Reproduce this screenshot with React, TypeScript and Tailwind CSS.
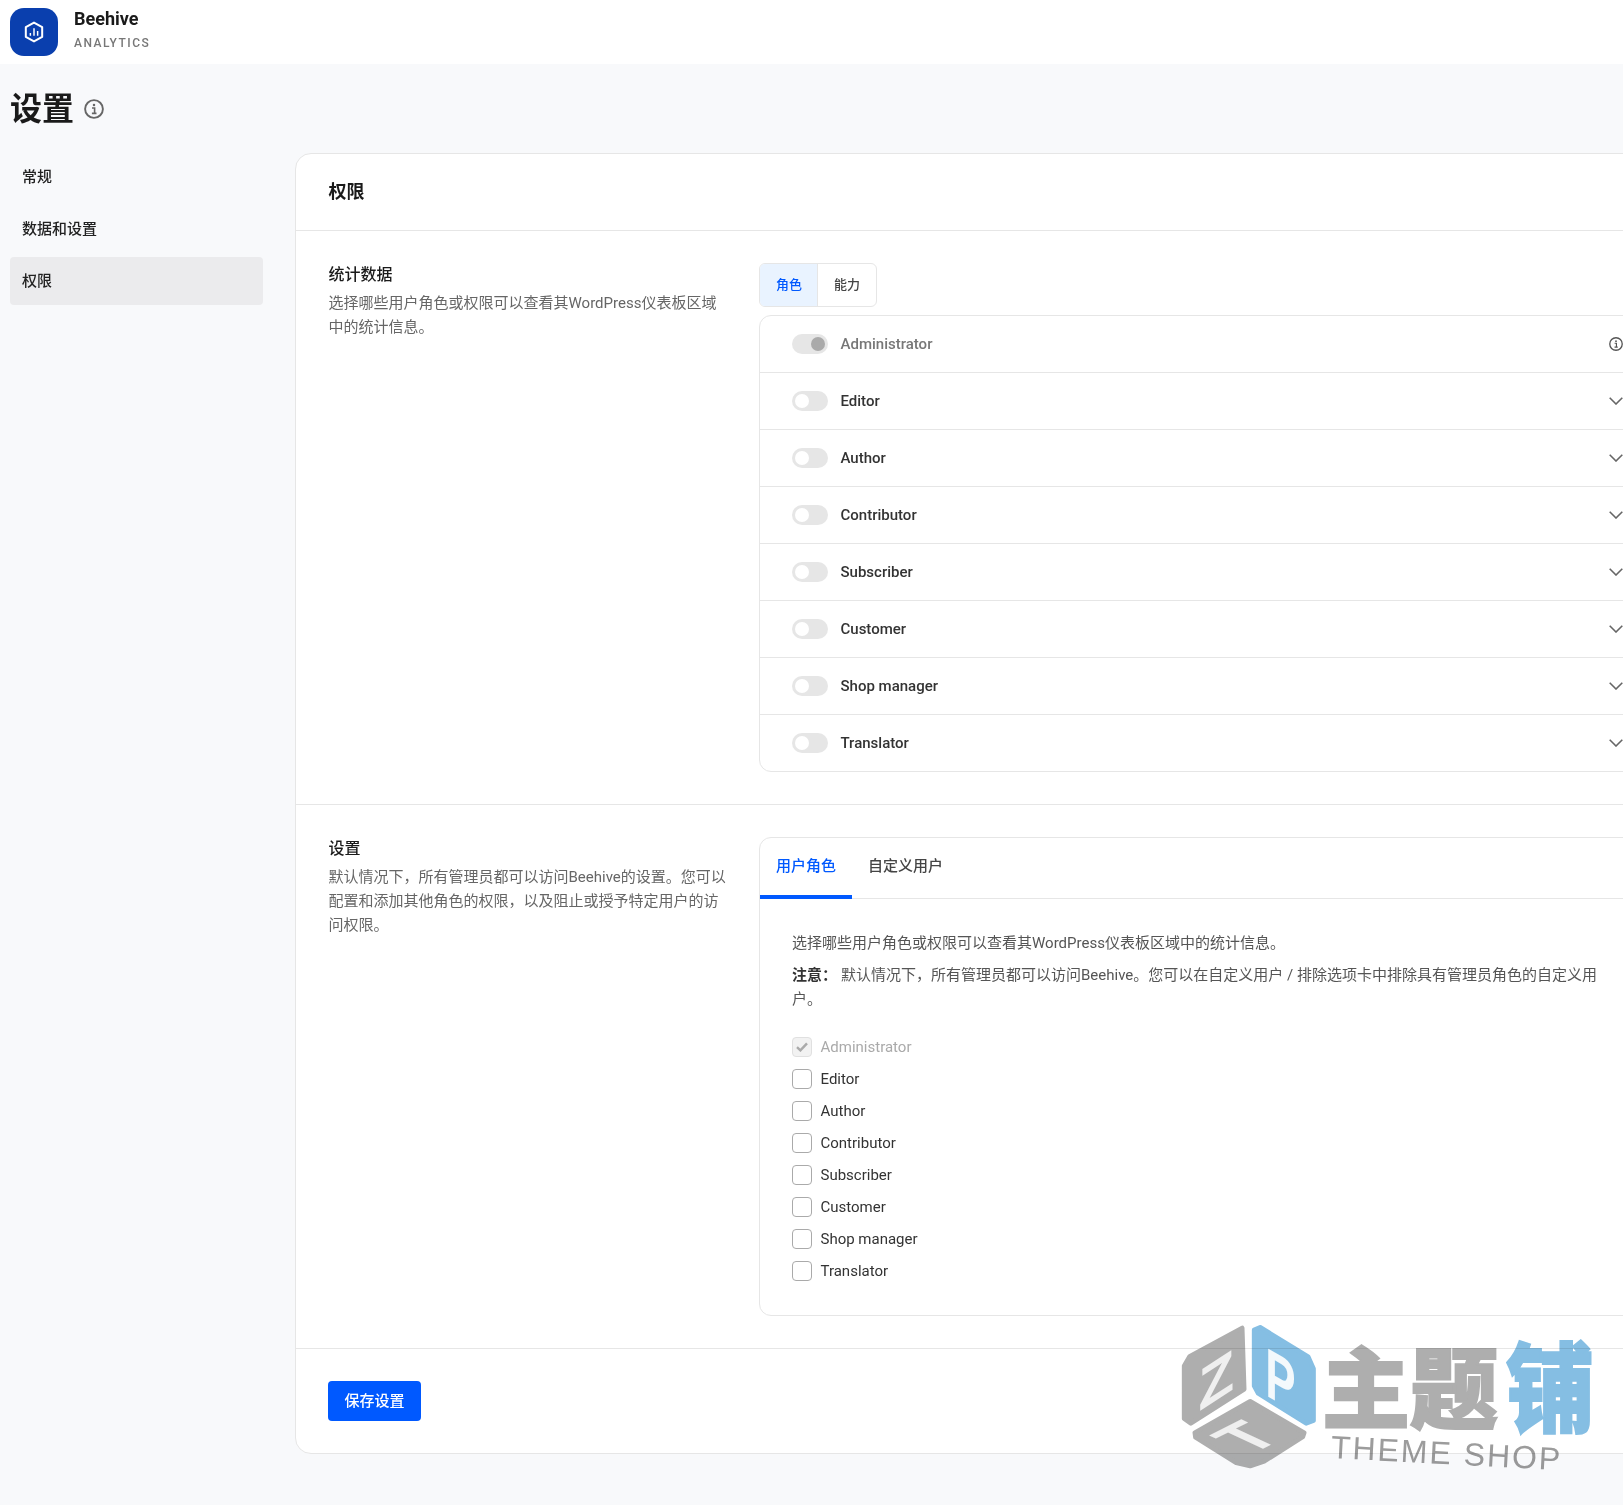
import React from 'react';

const roles = ['Editor', 'Author', 'Contributor', 'Subscriber', 'Customer', 'Shop manager', 'Translator'];

const InfoIcon = ({ className = '' }: { className?: string }) => (
  <svg viewBox="0 0 20 20" className={className} fill="none">
    <circle cx="10" cy="10" r="8.9" stroke="currentColor" strokeWidth="1.9" />
    <circle cx="10" cy="6" r="1.25" fill="currentColor" />
    <path d="M8 9h2.6v5M7.9 14.4h4.6" stroke="currentColor" strokeWidth="1.6" />
  </svg>
);

const Toggle = ({ on = false }: { on?: boolean }) => (
  <span className={`flex h-5 w-9 shrink-0 items-center rounded-full bg-[#e6e6e6] px-[3px] ${on ? 'justify-end' : 'justify-start'}`}>
    <span className={`h-[14px] w-[14px] rounded-full ${on ? 'bg-[#aaaaaa]' : 'bg-white'}`} />
  </span>
);

const RoleRow = ({ label }: { label: string }) => (
  <div className="flex h-[57px] items-center border-t border-[#e6e6e6] px-8">
    <Toggle />
    <span className="ml-[12.5px] text-[15px] font-medium text-[#333333]">{label}</span>
    <svg viewBox="0 0 14 8" className="ml-auto h-2 w-[14px] text-[#666666]" fill="none">
      <path d="M0.7 0.8 7 7 13.3 0.8" stroke="currentColor" strokeWidth="1.6" />
    </svg>
  </div>
);

const CheckRow = ({ label, disabled = false }: { label: string; disabled?: boolean }) => (
  <label className="flex h-5 items-center gap-[8.5px]">
    <span className={`flex h-5 w-5 items-center justify-center rounded-[4px] border ${disabled ? 'border-[#e0e0e0] bg-[#f2f2f2]' : 'border-[#aaaaaa] bg-white'}`}>
      {disabled && (
        <svg viewBox="0 0 12 10" className="h-[10px] w-3" fill="none">
          <path d="M1 5.2 4.4 8.4 11 1.4" stroke="#aaaaaa" strokeWidth="2.4" />
        </svg>
      )}
    </span>
    <span className={`text-[15px] ${disabled ? 'text-[#aaaaaa]' : 'text-[#333333]'}`}>{label}</span>
  </label>
);

// ZTP cube + wordmark stamped over the bottom right corner
const Watermark = () => (
  <div className="pointer-events-none absolute left-[1181px] top-[1324px] h-[150px] w-[420px] blur-[0.5px] mix-blend-multiply">
    <svg viewBox="93 72 410 435" className="absolute left-0 top-0 h-[145px] w-[137px]">
      <g strokeLinejoin="round" strokeWidth="14">
        <path d="M276 84 282 268 122 370 102 356 102 198 118 170Z" fill="#aeaeae" stroke="#aeaeae" />
        <path d="M312 90 330 82 474 170 490 206 490 362 468 370 324 280 312 258Z" fill="#85bee3" stroke="#85bee3" />
        <path d="M300 304 462 398 458 410 342 484 300 498 258 488 136 412 134 398Z" fill="#aeaeae" stroke="#aeaeae" />
      </g>
      <text transform="translate(145,335) skewY(-33)" fontSize="175" fontWeight="700" fill="#efefef" fontFamily="Liberation Sans, sans-serif">Z</text>
      <text transform="translate(345,285) skewY(30) scale(0.65,1)" fontSize="210" fontWeight="700" fill="#f4f9fc" fontFamily="Liberation Sans, sans-serif">P</text>
      <text transform="matrix(1.64,-0.82,1.82,0.84,300,465)" fontSize="100" fontWeight="700" fill="#efefef" fontFamily="Liberation Sans, sans-serif">T</text>
    </svg>
    <div className="absolute left-[141px] top-[23px] flex items-center text-[88px] font-black leading-[88px] text-[#aeaeae] [-webkit-text-stroke:2px_#aeaeae]">
      主题<span className="ml-2 inline-block scale-y-110 text-[#85bee3] [-webkit-text-stroke:2px_#85bee3]">铺</span>
    </div>
    <div className="absolute left-[150px] top-[107px] origin-left rotate-[3deg] font-['Liberation_Sans',sans-serif] text-[32px] leading-[32px] tracking-[2px] text-[#9c9c9c]">
      THEME SHOP
    </div>
  </div>
);

export default function App() {
  return (
    <div className="relative h-[1505px] w-full overflow-hidden bg-[#f8f9fb] font-['Roboto','Noto_Sans_CJK_SC',sans-serif] text-[#333333]">
      <header className="flex h-[64px] items-center gap-4 bg-white pl-[10px]">
        <div className="flex h-12 w-12 items-center justify-center rounded-[14px] bg-[#0a3fae]">
          <svg viewBox="0 0 22 24" className="h-[22px] w-5" fill="none">
            <path d="M11 1.6 20 6.6V17.4L11 22.4 2 17.4V6.6Z" stroke="#fff" strokeWidth="2.2" strokeLinejoin="round" />
            <path d="M7 13v3M11 8v8M15 11v5" stroke="#fff" strokeWidth="1.6" />
          </svg>
        </div>
        <div className="mb-[5px] flex flex-col gap-[3px]">
          <span className="text-[18px] font-bold leading-[24px] text-[#1a1a1a]">Beehive</span>
          <span className="text-[12px] font-medium leading-[18px] tracking-[1.5px] text-[#777777]">ANALYTICS</span>
        </div>
      </header>

      <div className="flex h-[89px] items-center gap-[10px] pl-[10px]">
        <h1 className="text-[32px] font-bold leading-[40px] text-[#1a1a1a]">设置</h1>
        <InfoIcon className="h-5 w-5 text-[#666666]" />
      </div>

      <div className="flex items-start pl-[10px]">
        <nav className="flex w-[253px] shrink-0 flex-col gap-1 text-[#222222]">
          <a className="flex h-12 items-center rounded-[4px] px-3 text-[15px] font-medium">常规</a>
          <a className="flex h-12 items-center rounded-[4px] px-3 text-[15px] font-medium">数据和设置</a>
          <a className="flex h-12 items-center rounded-[4px] bg-[#ebebed] px-3 text-[15px] font-medium">权限</a>
        </nav>

        <main className="ml-8 w-[1394px] shrink-0 rounded-[16px] border border-[#e6e6e6] bg-white">
          <div className="flex h-[77px] items-center border-b border-[#e6e6e6] pb-[2px] pl-[32.5px] pr-8">
            <h2 className="text-[18px] font-bold text-[#1a1a1a]">权限</h2>
          </div>

          <section className="flex gap-8 border-b border-[#e6e6e6] py-8 pl-[32.5px] pr-8">
            <div className="w-[398.5px] shrink-0">
              <h3 className="text-[16px] font-medium leading-[24px] text-[#1a1a1a]">统计数据</h3>
              <p className="mt-1 text-[15px] leading-[24px] text-[#666666]">选择哪些用户角色或权限可以查看其WordPress仪表板区域中的统计信息。</p>
            </div>
            <div className="w-[897px]">
              <div className="mb-2 flex h-[44px] w-[118px] overflow-hidden rounded-[6px] border border-[#e6e6e6] text-[13px] font-medium">
                <button className="w-[58px] border-r border-[#e6e6e6] bg-[#e9f3ff] pl-px text-[#0059ff]">角色</button>
                <button className="flex-1 text-[#444444]">能力</button>
              </div>
              <div className="overflow-hidden rounded-[12px] border border-[#e6e6e6]">
                <div className="flex h-[56px] items-center px-8">
                  <Toggle on />
                  <span className="ml-[12.5px] text-[15px] font-medium text-[#777777]">Administrator</span>
                  <InfoIcon className="ml-auto h-[14px] w-[14px] text-[#555555]" />
                </div>
                {roles.map((role) => (
                  <RoleRow key={role} label={role} />
                ))}
              </div>
            </div>
          </section>

          <section className="flex gap-8 border-b border-[#e6e6e6] py-8 pl-[32.5px] pr-8">
            <div className="w-[398.5px] shrink-0">
              <h3 className="text-[16px] font-medium leading-[24px] text-[#1a1a1a]">设置</h3>
              <p className="mt-1 text-[15px] leading-[24px] text-[#666666]">默认情况下，所有管理员都可以访问Beehive的设置。您可以配置和添加其他角色的权限，以及阻止或授予特定用户的访问权限。</p>
            </div>
            <div className="w-[897px] rounded-[12px] border border-[#e6e6e6]">
              <div className="flex h-[61px] border-b border-[#e6e6e6] text-[15px] font-medium">
                <button className="-mb-px w-[92px] border-b-[4px] border-[#0059ff] text-[#0059ff]">用户角色</button>
                <button className="-mb-px border-b-[4px] border-transparent px-4 text-[#444444]">自定义用户</button>
              </div>
              <div className="px-8 pb-[34px] pt-8">
                <p className="mb-2 text-[15px] leading-[24px] text-[#555555]">选择哪些用户角色或权限可以查看其WordPress仪表板区域中的统计信息。</p>
                <p className="text-[15px] leading-[24px] text-[#555555]">
                  <strong className="mr-1 font-bold text-[#333333]">注意：</strong>默认情况下，所有管理员都可以访问Beehive。您可以在自定义用户 / 排除选项卡中排除具有管理员角色的自定义用户。
                </p>
                <div className="mt-[26px] flex flex-col gap-3">
                  <CheckRow label="Administrator" disabled />
                  {roles.map((role) => (
                    <CheckRow key={role} label={role} />
                  ))}
                </div>
              </div>
            </div>
          </section>

          <div className="p-8">
            <button className="h-10 w-[93px] rounded-[4px] bg-[#0059ff] text-[15px] font-medium text-white">保存设置</button>
          </div>
        </main>
      </div>

      <Watermark />
    </div>
  );
}
